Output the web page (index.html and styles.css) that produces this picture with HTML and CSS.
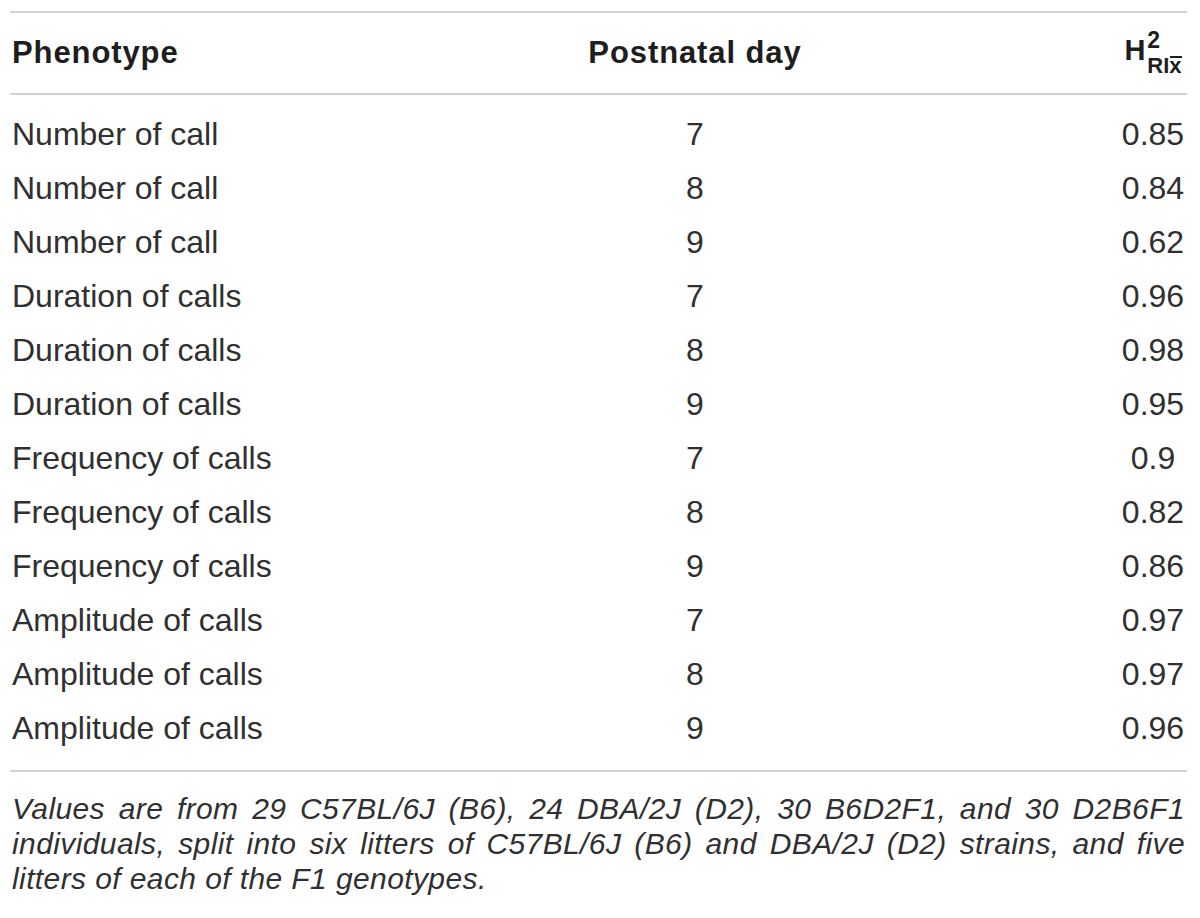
FILE: index.html
```html
<!DOCTYPE html>
<html>
<head>
<meta charset="utf-8">
<link rel="stylesheet" href="styles.css">
</head>
<body>
<div class="table">
  <div class="row head">
    <div class="c1">Phenotype</div>
    <div class="c2">Postnatal day</div>
    <div class="c3"><span class="val sym"><span class="h">H</span><span class="ss"><span class="sup">2</span><span class="sub">RI<span class="ov">x</span></span></span></span></div>
  </div>
  <div class="body">
    <div class="row"><div class="c1">Number of call</div><div class="c2">7</div><div class="c3"><span class="val">0.85</span></div></div>
    <div class="row"><div class="c1">Number of call</div><div class="c2">8</div><div class="c3"><span class="val">0.84</span></div></div>
    <div class="row"><div class="c1">Number of call</div><div class="c2">9</div><div class="c3"><span class="val">0.62</span></div></div>
    <div class="row"><div class="c1">Duration of calls</div><div class="c2">7</div><div class="c3"><span class="val">0.96</span></div></div>
    <div class="row"><div class="c1">Duration of calls</div><div class="c2">8</div><div class="c3"><span class="val">0.98</span></div></div>
    <div class="row"><div class="c1">Duration of calls</div><div class="c2">9</div><div class="c3"><span class="val">0.95</span></div></div>
    <div class="row"><div class="c1">Frequency of calls</div><div class="c2">7</div><div class="c3"><span class="val">0.9</span></div></div>
    <div class="row"><div class="c1">Frequency of calls</div><div class="c2">8</div><div class="c3"><span class="val">0.82</span></div></div>
    <div class="row"><div class="c1">Frequency of calls</div><div class="c2">9</div><div class="c3"><span class="val">0.86</span></div></div>
    <div class="row"><div class="c1">Amplitude of calls</div><div class="c2">7</div><div class="c3"><span class="val">0.97</span></div></div>
    <div class="row"><div class="c1">Amplitude of calls</div><div class="c2">8</div><div class="c3"><span class="val">0.97</span></div></div>
    <div class="row"><div class="c1">Amplitude of calls</div><div class="c2">9</div><div class="c3"><span class="val">0.96</span></div></div>
  </div>
  <p class="caption">Values are from 29 C57BL/6J (B6), 24 DBA/2J (D2), 30 B6D2F1, and 30 D2B6F1 individuals, split into six litters of C57BL/6J (B6) and DBA/2J (D2) strains, and five litters of each of the F1 genotypes.</p>
</div>
</body>
</html>
```

FILE: styles.css
```css
html, body {
  margin: 0;
  padding: 0;
  background: #ffffff;
}

body {
  font-family: "Liberation Sans", Arial, sans-serif;
  color: #303030;
}

.table {
  margin: 11px 13px 0 10px;
  border-top: 2px solid #d2d2d2;
}

.row {
  display: grid;
  grid-template-columns: 520px 330px 1fr;
  align-items: center;
  height: 54px;
  font-size: 32px;
}

.row .c1 {
  padding-left: 2px;
  white-space: nowrap;
}

.row .c2 {
  text-align: center;
}

.row .c3 {
  text-align: right;
  padding-right: 2px;
}

.val {
  display: inline-block;
  width: 64px;
  text-align: center;
}

.head {
  height: 79px;
  border-bottom: 2px solid #d2d2d2;
  font-weight: bold;
  font-size: 31px;
  letter-spacing: 0.9px;
  color: #1e1e1e;
  padding-bottom: 1px;
}

.body {
  padding: 12px 0 15px;
  border-bottom: 2px solid #d2d2d2;
}

.sym {
  letter-spacing: 0;
  display: inline-flex;
  align-items: flex-start;
  justify-content: center;
  padding-top: 2px;
}

.sym .h {
  font-size: 29px;
  line-height: 29px;
  margin-top: 6px;
}

.sym .ss {
  display: inline-flex;
  flex-direction: column;
  align-items: flex-start;
  margin-left: 2px;
}

.sym .sup {
  font-size: 23px;
  line-height: 20px;
}

.sym .sub {
  font-size: 22px;
  line-height: 22px;
  margin-top: 5px;
}

.sym .ov {
  position: relative;
  display: inline-block;
}

.sym .ov::before {
  content: "";
  position: absolute;
  left: 1px;
  right: 0;
  top: 1px;
  height: 2px;
  background: #1e1e1e;
}

.caption {
  margin: 19px 2px 0 2px;
  font-style: italic;
  font-size: 30px;
  letter-spacing: 0.4px;
  line-height: 35px;
  text-align: justify;
  color: #303030;
}
```
